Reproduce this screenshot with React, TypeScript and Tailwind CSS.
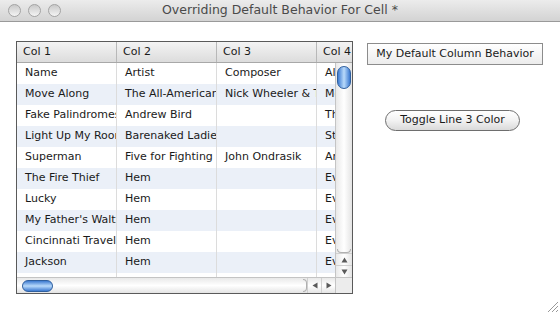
import React from 'react';

const rows: string[][] = [
  ['Name', 'Artist', 'Composer', 'Album'],
  ['Move Along', 'The All-American Rejects', 'Nick Wheeler & Tyson Ritter', 'Move Along'],
  ['Fake Palindromes', 'Andrew Bird', '', 'The Mysterious Production of Eggs'],
  ['Light Up My Room', 'Barenaked Ladies', '', 'Stunt'],
  ['Superman', 'Five for Fighting', 'John Ondrasik', 'America Town'],
  ['The Fire Thief', 'Hem', '', 'Eveningland'],
  ['Lucky', 'Hem', '', 'Eveningland'],
  ["My Father's Waltz", 'Hem', '', 'Eveningland'],
  ['Cincinnati Traveler', 'Hem', '', 'Eveningland'],
  ['Jackson', 'Hem', '', 'Eveningland'],
  ['', '', '', ''],
];

const Light = () => (
  <div className="w-[13px] h-[13px] rounded-full border border-[#a3a3a3] bg-linear-to-b from-[#c9c9c9] to-[#f4f4f4]" />
);

export default function App() {
  return (
    <div className="w-[560px] h-[314px] bg-white relative overflow-hidden font-['DejaVu_Sans',sans-serif] text-[#1a1a1a]">
      {/* title bar */}
      <div className="h-[22px] flex items-center px-[8px] border-b border-[#9a9a9a] bg-linear-to-b from-[#ececec] to-[#d3d3d3] relative">
        <div className="flex gap-[7px]">
          <Light />
          <Light />
          <Light />
        </div>
        <div className="absolute inset-0 flex items-center justify-center text-[12.5px] text-[#4a4a4a]">
          Overriding Default Behavior For Cell *
        </div>
      </div>

      <div className="flex pl-[16px] pt-[19px] gap-[14px]">
        {/* table in scroll pane */}
        <div className="w-[337px] h-[253px] border border-[#5a5a5a] flex flex-col overflow-hidden text-[11px]">
          {/* header */}
          <div className="h-[21px] flex border-b border-[#a8a8a8] bg-linear-to-b from-[#f4f4f4] to-[#dcdcdc] overflow-hidden shrink-0">
            {['Col 1', 'Col 2', 'Col 3', 'Col 4'].map((c) => (
              <div key={c} className="w-[100px] shrink-0 border-r border-[#b8b8b8] pl-[6px] flex items-center whitespace-nowrap">
                {c}
              </div>
            ))}
          </div>

          {/* body */}
          <div className="flex h-[214px] shrink-0">
            <div className="w-[318px] overflow-hidden">
              {rows.map((r, i) => (
                <div key={i} className={`flex h-[21px] ${i % 2 === 1 ? 'bg-[#ebf0f8]' : 'bg-white'}`}>
                  {r.map((cell, j) => (
                    <div
                      key={j}
                      className="w-[100px] shrink-0 border-r border-[#dcdcdc] pl-[8px] flex items-center whitespace-nowrap overflow-hidden"
                    >
                      {cell}
                    </div>
                  ))}
                </div>
              ))}
            </div>
            {/* vertical scrollbar */}
            <div className="w-[17px] border-l border-[#c4c4c4] bg-linear-to-r from-[#e9e9e9] via-white to-[#e4e4e4] flex flex-col">
              <div className="flex-1 pt-[3px] px-[1px]">
                <div className="h-[23px] rounded-full border border-[#2f5f9e] bg-linear-to-r from-[#3d7bd0] via-[#b9dafa] to-[#3b79d0]" />
              </div>
              <div className="h-[4px] mx-[1px] rounded-b-full border-b border-x border-[#b0b0b0]" />
              <div className="h-[12px] flex items-center justify-center border-t border-[#d0d0d0]">
                <svg width="7" height="6" viewBox="0 0 7 6"><path d="M3.5 0.5 L6.5 5.5 L0.5 5.5 Z" fill="#5a5a5a" /></svg>
              </div>
              <div className="h-[12px] flex items-center justify-center border-t border-[#d0d0d0]">
                <svg width="7" height="6" viewBox="0 0 7 6"><path d="M0.5 0.5 L6.5 0.5 L3.5 5.5 Z" fill="#5a5a5a" /></svg>
              </div>
            </div>
          </div>

          {/* horizontal scrollbar */}
          <div className="flex flex-1 border-t border-[#c4c4c4]">
            <div className="w-[318px] flex bg-linear-to-b from-[#e9e9e9] via-white to-[#e4e4e4]">
              <div className="flex-1 pl-[5px] py-[1px] flex items-center">
                <div className="w-[31px] h-[12px] rounded-full border border-[#2f5f9e] bg-linear-to-b from-[#3d7bd0] via-[#b9dafa] to-[#3b79d0]" />
              </div>
              <div className="w-[4px] my-[1px] rounded-r-full border-r border-y border-[#b0b0b0]" />
              <div className="w-[14px] flex items-center justify-center border-l border-[#d0d0d0]">
                <svg width="6" height="7" viewBox="0 0 6 7"><path d="M0.5 3.5 L5.5 0.5 L5.5 6.5 Z" fill="#5a5a5a" /></svg>
              </div>
              <div className="w-[14px] flex items-center justify-center border-l border-[#d0d0d0]">
                <svg width="6" height="7" viewBox="0 0 6 7"><path d="M0.5 0.5 L5.5 3.5 L0.5 6.5 Z" fill="#5a5a5a" /></svg>
              </div>
            </div>
            <div className="w-[17px] border-l border-[#c4c4c4] bg-[#ececec]" />
          </div>
        </div>

        {/* buttons */}
        <div className="flex flex-col pt-[2px] text-[11px]">
          <button className="w-[176px] h-[22px] border border-[#8c8c8c] bg-linear-to-b from-white to-[#ececec] flex items-center justify-center">
            My Default Column Behavior
          </button>
          <button className="mt-[45px] ml-[18px] w-[135px] h-[21px] rounded-full border border-[#6e6e6e] bg-linear-to-b from-white via-[#f2f2f2] to-[#dadada] flex items-center justify-center">
            Toggle Line 3 Color
          </button>
        </div>
      </div>

      {/* resize grip */}
      <svg className="absolute right-[1px] bottom-[1px]" width="14" height="14" viewBox="0 0 14 14">
        <path d="M13 3 L3 13 M13 7 L7 13 M13 11 L11 13" stroke="#9a9a9a" strokeWidth="1" />
      </svg>
    </div>
  );
}
